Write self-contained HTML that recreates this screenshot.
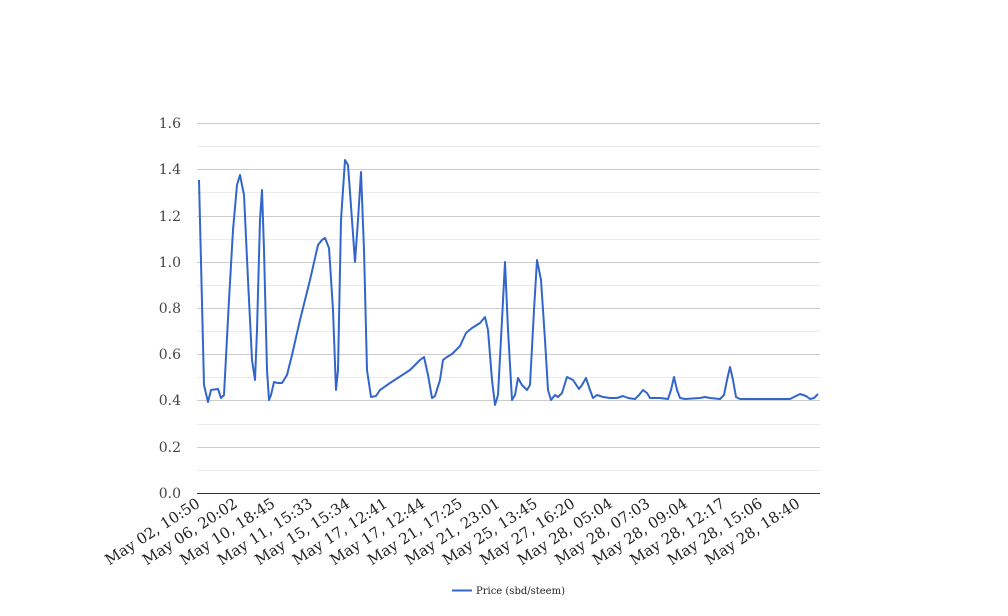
<!DOCTYPE html>
<html><head><meta charset="utf-8"><style>body{margin:0;background:#fff}svg{display:block}</style></head><body>
<svg width="1008" height="616" xmlns="http://www.w3.org/2000/svg" font-family="DejaVu Serif, serif">
<g stroke="#ebebeb" stroke-width="1">
<line x1="197" x2="820" y1="146.5" y2="146.5"/><line x1="197" x2="820" y1="192.5" y2="192.5"/><line x1="197" x2="820" y1="239.5" y2="239.5"/><line x1="197" x2="820" y1="285.5" y2="285.5"/><line x1="197" x2="820" y1="331.5" y2="331.5"/><line x1="197" x2="820" y1="377.5" y2="377.5"/><line x1="197" x2="820" y1="424.5" y2="424.5"/><line x1="197" x2="820" y1="470.5" y2="470.5"/>
</g>
<g stroke="#cccccc" stroke-width="1">
<line x1="197" x2="820" y1="123.5" y2="123.5"/><line x1="197" x2="820" y1="169.5" y2="169.5"/><line x1="197" x2="820" y1="216.5" y2="216.5"/><line x1="197" x2="820" y1="262.5" y2="262.5"/><line x1="197" x2="820" y1="308.5" y2="308.5"/><line x1="197" x2="820" y1="354.5" y2="354.5"/><line x1="197" x2="820" y1="400.5" y2="400.5"/><line x1="197" x2="820" y1="447.5" y2="447.5"/>
</g>
<line x1="197" x2="820" y1="493.5" y2="493.5" stroke="#333" stroke-width="1"/>
<g font-size="14" fill="#444" text-anchor="end">
<text x="181" y="128">1.6</text><text x="181" y="174">1.4</text><text x="181" y="221">1.2</text><text x="181" y="267">1.0</text><text x="181" y="313">0.8</text><text x="181" y="359">0.6</text><text x="181" y="405">0.4</text><text x="181" y="452">0.2</text><text x="181" y="498">0.0</text>
</g>
<polyline fill="none" stroke="#3366cc" stroke-width="2" stroke-linejoin="round" points="199,180 204,385 208,402 211,390 218,389 221,398 224,395 229,300 233,230 237,185 240,175 244,195 248,280 252,360 255,380 257,330 260,220 262,190 264,250 267,370 269,400 271,395 274,382 278,383 282,383 287,375 292,355 300,320 310,280 318,245 322,240 325,238 329,248 333,310 336,390 338,370 341,220 345,160 348,165 352,220 355,262 358,220 361,172 364,250 367,370 371,397 376,396 380,390 390,383 410,370 420,360 424,357 428,375 432,398 435,396 440,380 443,360 447,357 452,354 460,346 466,333 472,328 480,323 485,317 488,330 492,380 495,405 498,395 502,320 505,262 508,330 512,400 515,395 518,378 522,385 527,390 530,385 534,310 537,260 541,280 545,340 548,390 551,400 555,395 558,397 562,393 567,377 573,380 579,389 582,385 586,378 590,390 593,398 597,395 603,397 610,398 617,398 623,396 628,398 635,399 639,395 643,390 647,393 650,398 660,398 668,399 671,390 674,377 677,390 680,398 685,399 700,398 705,397 710,398 720,399 724,395 727,380 730,367 733,380 736,397 740,399 750,399 790,399 800,394 806,396 810,399 814,398 818,394"/>
<g font-size="15" fill="#222" text-anchor="end">
<text transform="translate(201,506) rotate(-33)">May 02, 10:50</text>
<text transform="translate(238.5,506) rotate(-33)">May 06, 20:02</text>
<text transform="translate(276,506) rotate(-33)">May 10, 18:45</text>
<text transform="translate(313.5,506) rotate(-33)">May 11, 15:33</text>
<text transform="translate(351,506) rotate(-33)">May 15, 15:34</text>
<text transform="translate(388.5,506) rotate(-33)">May 17, 12:41</text>
<text transform="translate(426,506) rotate(-33)">May 17, 12:44</text>
<text transform="translate(463.5,506) rotate(-33)">May 21, 17:25</text>
<text transform="translate(501,506) rotate(-33)">May 21, 23:01</text>
<text transform="translate(538.5,506) rotate(-33)">May 25, 13:45</text>
<text transform="translate(576,506) rotate(-33)">May 27, 16:20</text>
<text transform="translate(613.5,506) rotate(-33)">May 28, 05:04</text>
<text transform="translate(651,506) rotate(-33)">May 28, 07:03</text>
<text transform="translate(688.5,506) rotate(-33)">May 28, 09:04</text>
<text transform="translate(726,506) rotate(-33)">May 28, 12:17</text>
<text transform="translate(763.5,506) rotate(-33)">May 28, 15:06</text>
<text transform="translate(801,506) rotate(-33)">May 28, 18:40</text>
</g>
<line x1="452" x2="472" y1="590.5" y2="590.5" stroke="#3366cc" stroke-width="2"/>
<text x="476" y="594" font-size="10" fill="#222">Price (sbd/steem)</text>
</svg>
</body></html>
